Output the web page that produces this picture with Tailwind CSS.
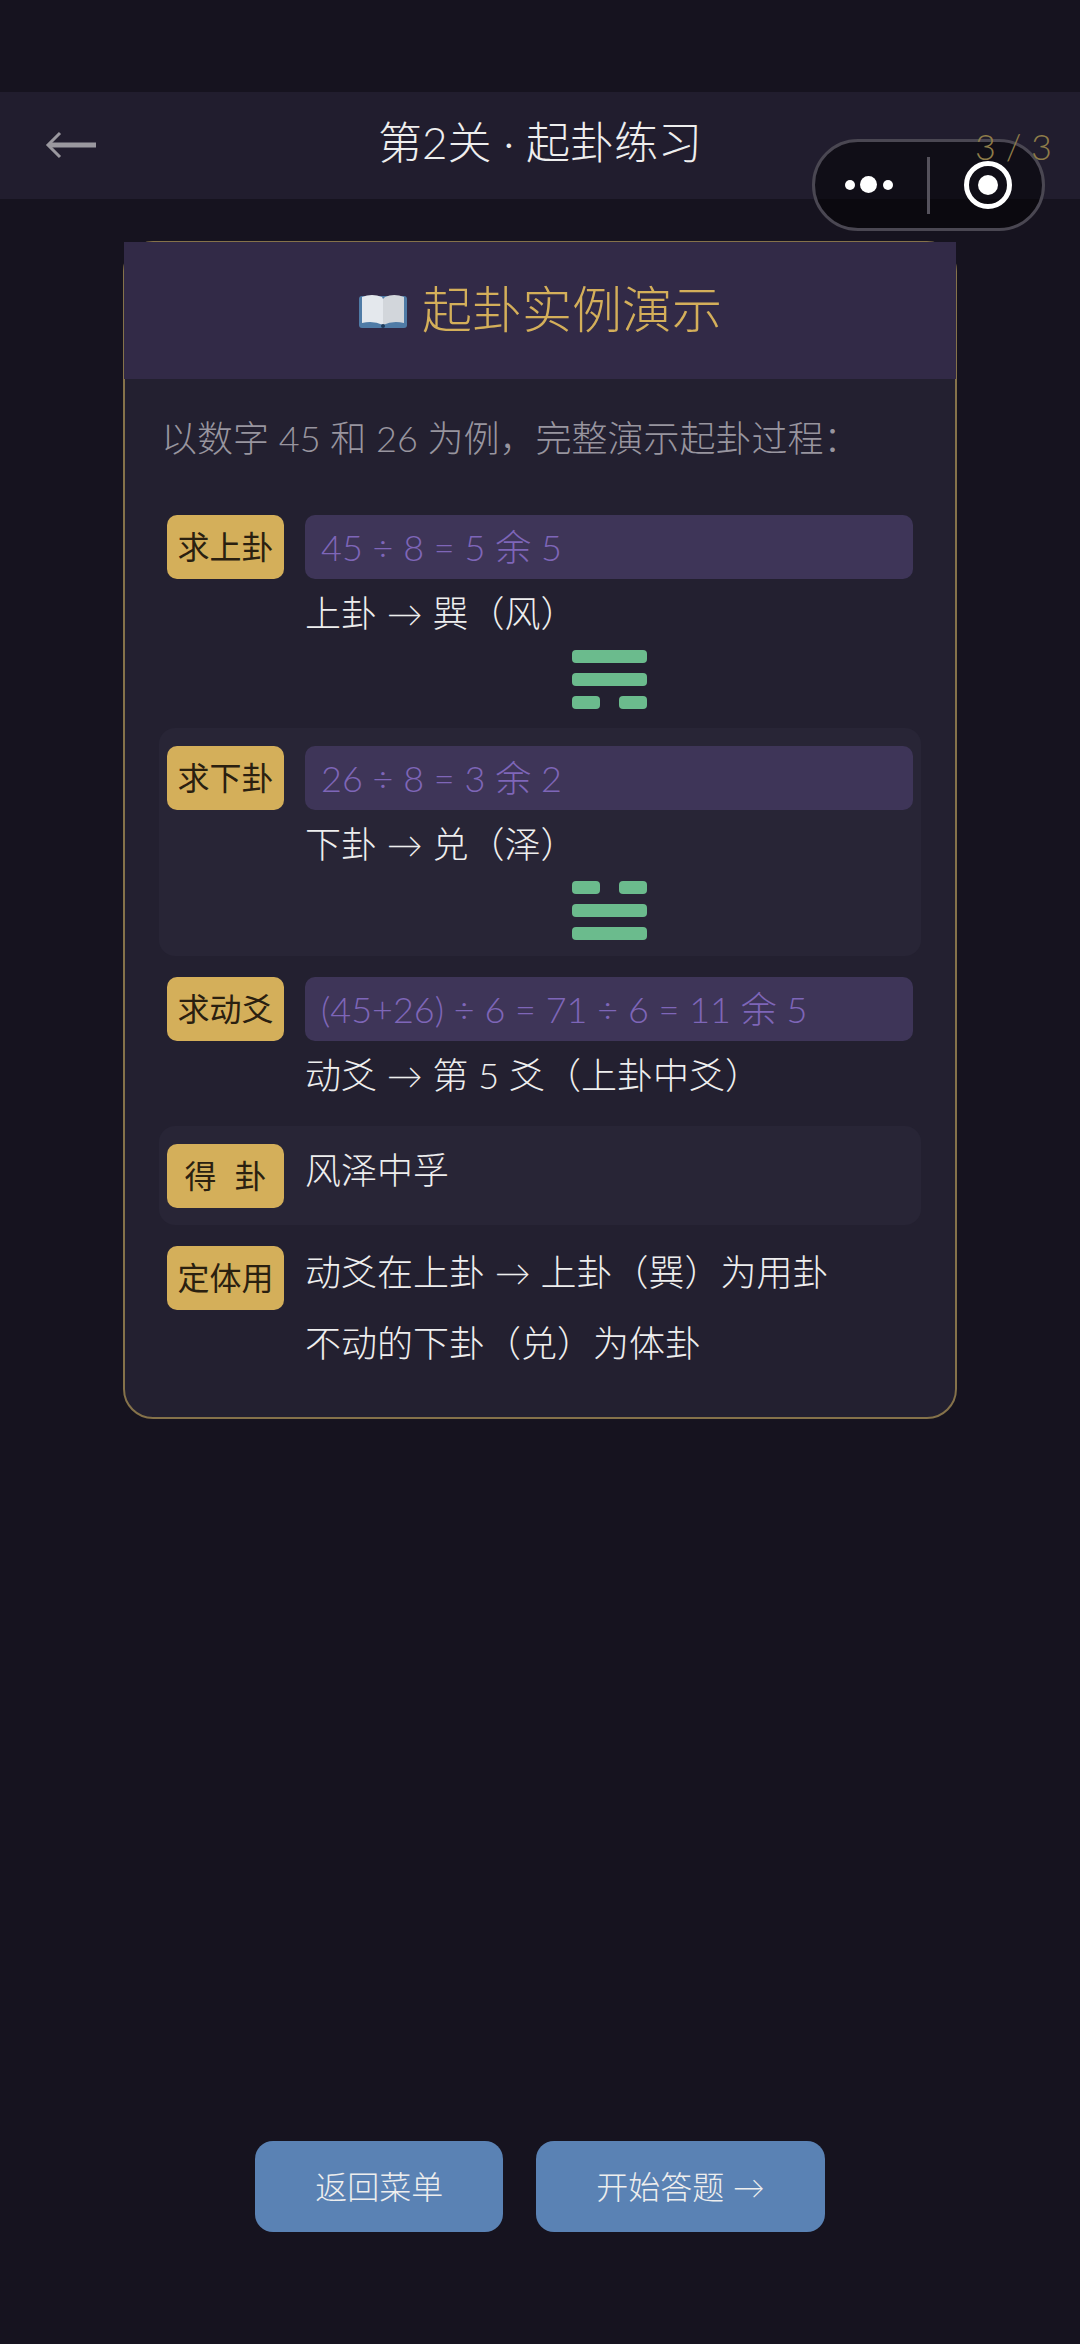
<!DOCTYPE html>
<html lang="zh-CN">
<head>
  <meta charset="UTF-8" />
  <meta name="viewport" content="width=device-width, initial-scale=1.0"/>
  <title>起卦练习</title>
  <script src="https://cdn.jsdelivr.net/npm/@tailwindcss/browser@4"></script>
</head>
<body class="bg-[#16131f] font-['Lato','Noto_Sans_CJK_SC',sans-serif] font-light text-[#eeeeee]">
  <div class="relative w-[1080px] h-[2344px] flex flex-col overflow-hidden">

    <!-- Nav -->
    <div class="mt-[92px] h-[107px] shrink-0 bg-[#211d2e] flex items-center justify-center relative">
      <svg class="absolute left-[45px] top-[39px]" width="51" height="28" viewBox="0 0 51 28" fill="none" stroke="#9a989f">
        <path d="M51 14H4" stroke-width="5"/>
        <path d="M15 2 3 14l12 12" stroke-width="3"/>
      </svg>
      <span class="text-[44px] leading-none -mt-[8px]">第2关 · 起卦练习</span>
      <span class="absolute z-20 left-[975px] top-[36px] text-[36px] leading-[36px] whitespace-nowrap text-[#8e7c49]">3 / 3</span>
    </div>

    <!-- Capsule -->
    <div class="absolute z-10 left-[812px] top-[139px] w-[233px] h-[92px] rounded-full border-[3px] border-[#4a4752] bg-black/50">
      <span class="absolute left-[30px] top-[38px] w-[10px] h-[10px] rounded-full bg-white"></span>
      <span class="absolute left-[45px] top-[34px] w-[17px] h-[17px] rounded-full bg-white"></span>
      <span class="absolute left-[68px] top-[38px] w-[10px] h-[10px] rounded-full bg-white"></span>
      <span class="absolute left-[112px] top-[15px] w-[3px] h-[57px] bg-[#55525c]"></span>
      <span class="absolute left-[149px] top-[19px] w-[48px] h-[48px] rounded-full border-[5px] border-white flex items-center justify-center">
        <span class="w-[20px] h-[20px] rounded-full bg-white"></span>
      </span>
    </div>

    <!-- Card -->
    <div class="mt-[42px] mx-[123px] rounded-[30px] border-2 border-[#85724a] bg-[#232030]">
      <div class="-mx-[1px] -mt-[1px] h-[137px] bg-[#322a47] flex items-center justify-center gap-[14px]">
        <svg width="50" height="38" viewBox="0 0 50 38">
          <path d="M1 7q0-3 3-3h42q3 0 3 3v26q0 3-3 3H4q-3 0-3-3z" fill="#4f7ba6"/>
          <path d="M4 5q10-4 20 0l1 2v26q-10-5-21-2z" fill="#e4e8ed"/>
          <path d="M46 5q-10-4-19 0l-2 2v26q10-5 21-2z" fill="#d2d6db"/>
          <circle cx="25" cy="34" r="2" fill="#1d3a5c"/>
        </svg>
        <span class="text-[50px] leading-none text-[#d4af5a] -mt-[4px]">起卦实例演示</span>
      </div>

      <div class="px-[34px] pb-[32px]">
        <p class="pt-[32px] pb-[32px] pl-[2px] text-[36px] leading-[54px] text-[#98959f]">以数字 45 和 26 为例，完整演示起卦过程：</p>

        <div class="flex flex-col gap-[3px]">
          <!-- 上卦 -->
          <div class="flex gap-[21px] px-[8px] pt-[18px] pb-[16px] rounded-[16px]">
            <div class="w-[117px] h-[64px] shrink-0 rounded-[10px] bg-[#d4af5a] flex items-center justify-center text-[32px] font-normal text-[#2a2010]">求上卦</div>
            <div class="flex-1">
              <div class="h-[64px] rounded-[10px] bg-[#3e3558] pl-[16px] flex items-center text-[36px] text-[#7e66b8]">45 ÷ 8 = 5 余 5</div>
              <p class="mt-[8px] text-[36px] leading-[52px]">上卦 → 巽（风）</p>
              <div class="mt-[11px] mx-auto w-[75px] flex flex-col gap-[10px]">
                <div class="h-[13px] rounded-[4px] bg-[#6bbb8d]"></div>
                <div class="h-[13px] rounded-[4px] bg-[#6bbb8d]"></div>
                <div class="flex justify-between">
                  <div class="w-[28px] h-[13px] rounded-[4px] bg-[#6bbb8d]"></div>
                  <div class="w-[28px] h-[13px] rounded-[4px] bg-[#6bbb8d]"></div>
                </div>
              </div>
            </div>
          </div>

          <!-- 下卦 -->
          <div class="flex gap-[21px] px-[8px] pt-[18px] pb-[16px] rounded-[16px] bg-[#282536]">
            <div class="w-[117px] h-[64px] shrink-0 rounded-[10px] bg-[#d4af5a] flex items-center justify-center text-[32px] font-normal text-[#2a2010]">求下卦</div>
            <div class="flex-1">
              <div class="h-[64px] rounded-[10px] bg-[#3e3558] pl-[16px] flex items-center text-[36px] text-[#7e66b8]">26 ÷ 8 = 3 余 2</div>
              <p class="mt-[8px] text-[36px] leading-[52px]">下卦 → 兑（泽）</p>
              <div class="mt-[11px] mx-auto w-[75px] flex flex-col gap-[10px]">
                <div class="flex justify-between">
                  <div class="w-[28px] h-[13px] rounded-[4px] bg-[#6bbb8d]"></div>
                  <div class="w-[28px] h-[13px] rounded-[4px] bg-[#6bbb8d]"></div>
                </div>
                <div class="h-[13px] rounded-[4px] bg-[#6bbb8d]"></div>
                <div class="h-[13px] rounded-[4px] bg-[#6bbb8d]"></div>
              </div>
            </div>
          </div>

          <!-- 动爻 -->
          <div class="flex gap-[21px] px-[8px] pt-[18px] pb-[22px] rounded-[16px]">
            <div class="w-[117px] h-[64px] shrink-0 rounded-[10px] bg-[#d4af5a] flex items-center justify-center text-[32px] font-normal text-[#2a2010]">求动爻</div>
            <div class="flex-1">
              <div class="h-[64px] rounded-[10px] bg-[#3e3558] pl-[16px] flex items-center text-[36px] text-[#7e66b8]">(45+26) ÷ 6 = 71 ÷ 6 = 11 余 5</div>
              <p class="mt-[8px] text-[36px] leading-[52px]">动爻 → 第 5 爻（上卦中爻）</p>
            </div>
          </div>

          <!-- 得卦 -->
          <div class="flex gap-[21px] px-[8px] pt-[18px] pb-[17px] rounded-[16px] bg-[#282536]">
            <div class="w-[117px] h-[64px] shrink-0 rounded-[10px] bg-[#d4af5a] flex items-center justify-center gap-[18px] text-[32px] font-normal text-[#2a2010]"><span>得</span><span>卦</span></div>
            <p class="text-[36px] leading-[52px]">风泽中孚</p>
          </div>

          <!-- 体用 -->
          <div class="flex gap-[21px] px-[8px] pt-[18px] pb-[16px] rounded-[16px]">
            <div class="w-[117px] h-[64px] shrink-0 rounded-[10px] bg-[#d4af5a] flex items-center justify-center text-[32px] font-normal text-[#2a2010]">定体用</div>
            <div class="flex-1 flex flex-col gap-[19px]">
              <p class="text-[36px] leading-[52px]">动爻在上卦 → 上卦（巽）为用卦</p>
              <p class="text-[36px] leading-[52px]">不动的下卦（兑）为体卦</p>
            </div>
          </div>
        </div>
      </div>
    </div>

    <!-- Buttons -->
    <div class="mt-auto mb-[112px] flex justify-center gap-[33px]">
      <button class="h-[91px] px-[60px] rounded-[18px] bg-[#5a82b4] text-[32px]">返回菜单</button>
      <button class="h-[91px] px-[60px] rounded-[18px] bg-[#5a82b4] text-[32px]">开始答题 →</button>
    </div>
  </div>
</body>
</html>
